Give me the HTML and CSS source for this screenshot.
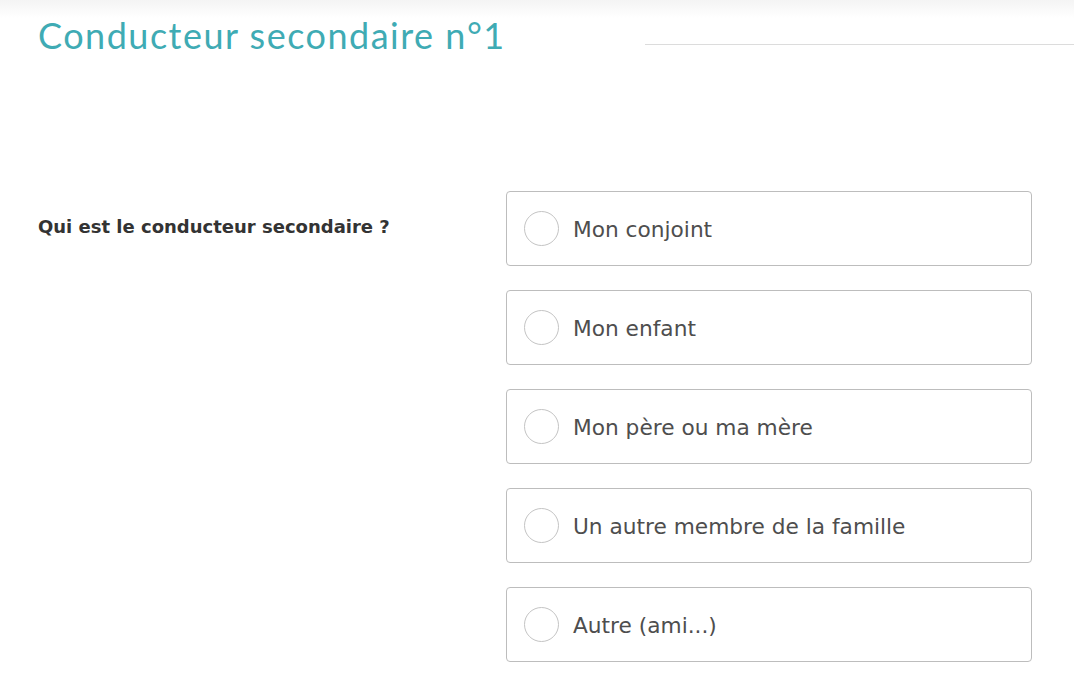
FILE: index.html
```html
<!DOCTYPE html>
<html lang="fr">
  <head>
    <meta charset="UTF-8">
    <meta name="viewport" content="width=device-width, initial-scale=1.0">
    <title>Conducteur secondaire</title>
    <link rel="stylesheet" href="styles.css">
  </head>
  <body>
    <div class="topshade"></div>
    <header class="step-head">
      <h1>Conducteur secondaire n°1</h1>
      <div class="rule"></div>
    </header>
    <section class="question">
      <p class="label">Qui est le conducteur secondaire ?</p>
      <div class="choices">
        <label class="choice"><input type="radio" name="relation"><span class="dot"></span>Mon conjoint</label>
        <label class="choice"><input type="radio" name="relation"><span class="dot"></span>Mon enfant</label>
        <label class="choice"><input type="radio" name="relation"><span class="dot"></span>Mon père ou ma mère</label>
        <label class="choice"><input type="radio" name="relation"><span class="dot"></span>Un autre membre de la famille</label>
        <label class="choice"><input type="radio" name="relation"><span class="dot"></span>Autre (ami...)</label>
      </div>
    </section>
  </body>
</html>
```

FILE: styles.css
```css
body {
  margin: 0;
  font-family: "DejaVu Sans", sans-serif;
  background: #fff;
  position: relative;
}
.topshade {
  position: absolute;
  top: 0;
  left: 0;
  right: 0;
  height: 18px;
  background: linear-gradient(#f4f4f4, #fff);
}
.step-head {
  position: relative;
  display: flex;
  align-items: center;
  padding: 12px 0 0 38px;
  height: 46px;
}
.step-head h1 {
  margin: 0;
  font-family: Lato, sans-serif;
  font-weight: 400;
  font-size: 36px;
  letter-spacing: 1.5px;
  color: #3fabb4;
  white-space: nowrap;
}
.rule {
  flex: 1;
  height: 1px;
  background: #dcdcdc;
  margin-left: 139px;
  margin-top: 19px;
}
.question {
  display: flex;
  padding: 133px 42px 0 38px;
}
.label {
  flex: 1;
  margin: 25px 0 0;
  font-weight: 700;
  font-size: 18px;
  color: #333;
}
.choices {
  width: 526px;
  display: flex;
  flex-direction: column;
  gap: 24px;
}
.choice {
  display: flex;
  align-items: center;
  height: 73px;
  border: 1px solid #bdbdbd;
  border-radius: 4px;
  padding: 2px 0 0 17px;
  box-sizing: border-box;
  height: 75px;
  font-size: 21.7px;
  color: #4e4e4e;
  cursor: pointer;
}
.choice input {
  display: none;
}
.dot {
  width: 33px;
  height: 33px;
  border: 1px solid #c4c4c4;
  border-radius: 50%;
  margin: -2px 14px 0 0;
}
```
